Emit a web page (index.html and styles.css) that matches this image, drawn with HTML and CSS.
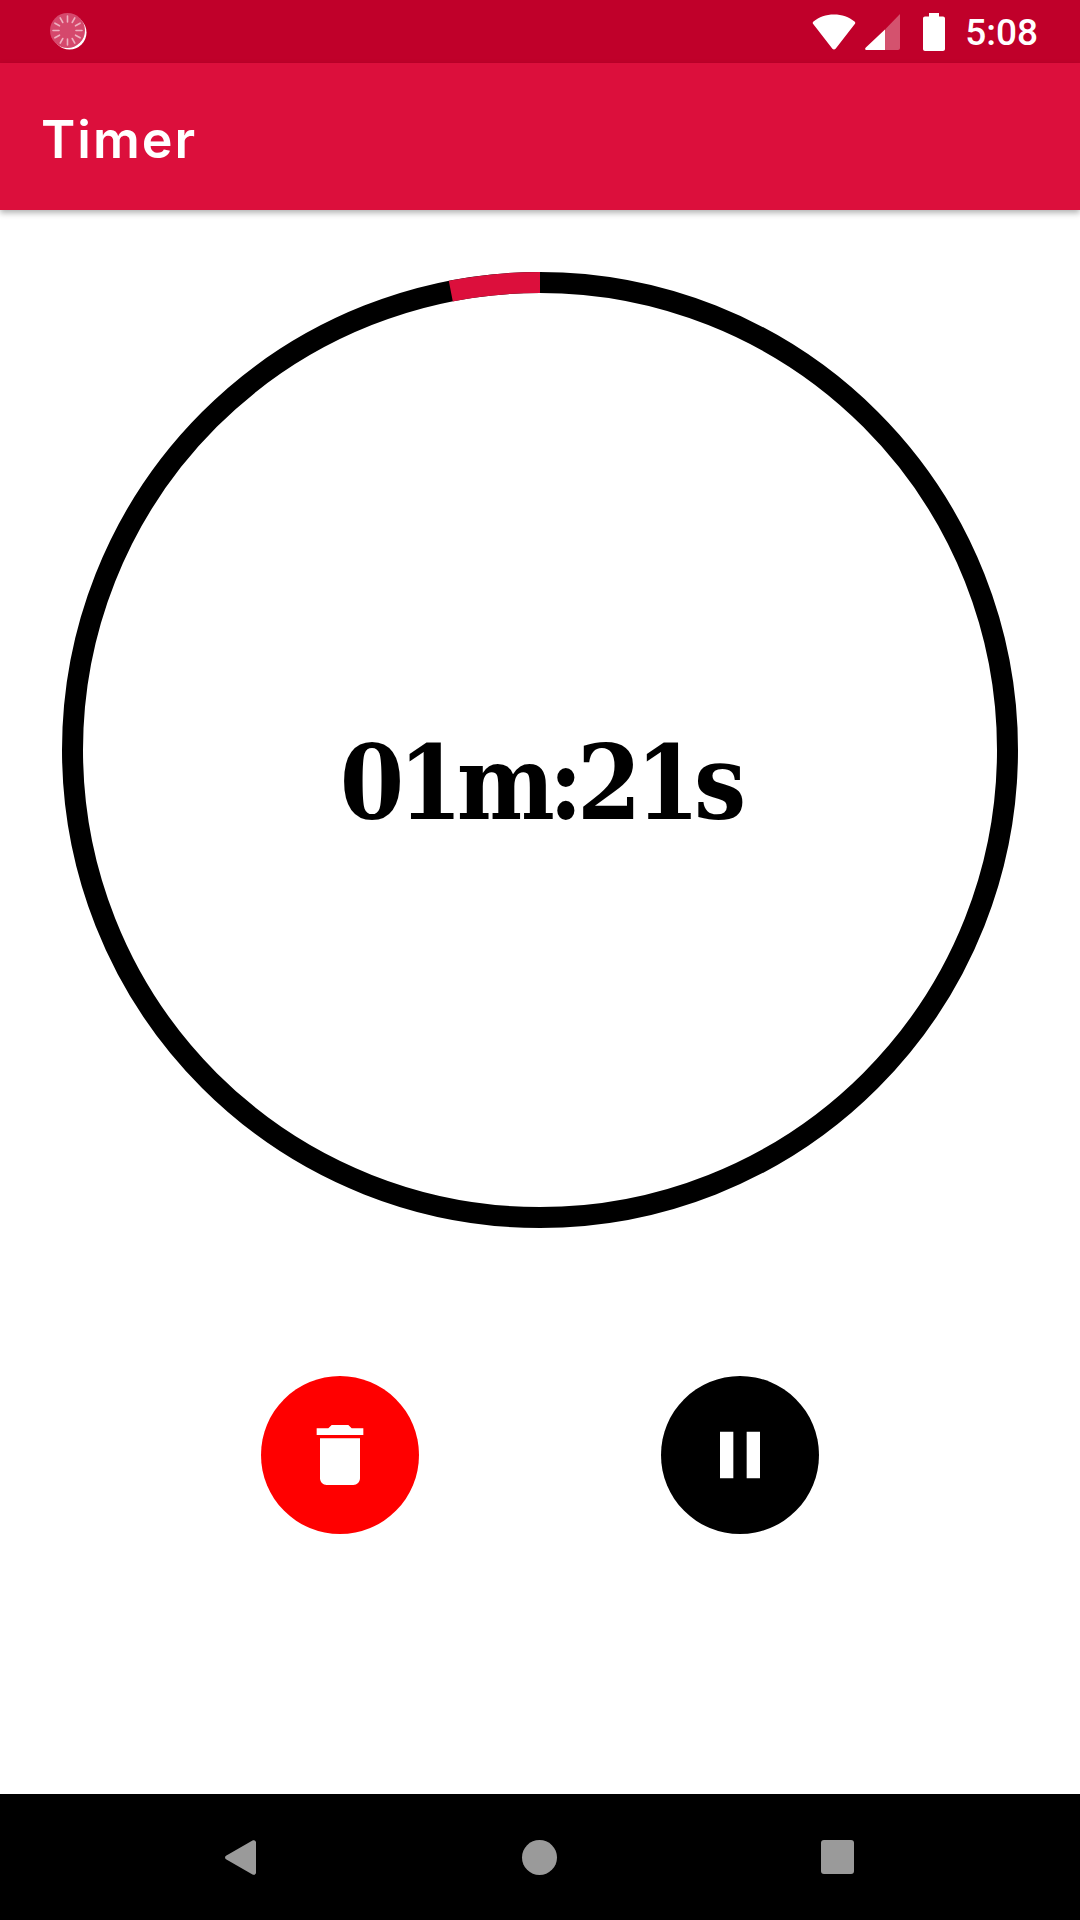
FILE: index.html
```html
<!DOCTYPE html>
<html lang="en">
  <head>
    <meta charset="UTF-8" />
    <meta name="viewport" content="width=device-width, initial-scale=1.0" />
    <title>Timer</title>
    <link rel="stylesheet" href="styles.css">
  </head>
  <body>
    <div class="screen">
      <div class="status-bar">
        <svg class="status-loader" viewBox="0 0 37 37">
          <circle cx="19.5" cy="19.5" r="17" fill="#fff"/>
          <circle cx="17.5" cy="17.5" r="17.5" fill="#d5486c"/>
          <g stroke="#eeb0c0" stroke-width="1.6" stroke-linecap="round">
            <path d="M17.5 3v6M17.5 26v6M3 17.5h6M26 17.5h6"/>
            <path d="M10.2 4.9l2.6 4.6M22.2 25.5l2.6 4.6M4.9 10.2l4.6 2.6M25.5 22.2l4.6 2.6"/>
            <path d="M24.8 4.9l-2.6 4.6M12.8 25.5l-2.6 4.6M30.1 10.2l-4.6 2.6M9.5 22.2l-4.6 2.6"/>
          </g>
        </svg>
        <div class="status-right">
          <svg class="icon-wifi" viewBox="0 0 44 36">
            <path d="M1.500 7.500C7 3 14 .5 22 .5s15 2.500 20.500 7c.9.800 1 1.700.3 2.600L23.600 34.800c-.8 1-2.400 1-3.200 0L1.200 10.100c-.7-.9-.6-1.800.3-2.600z" fill="#fff"/>
          </svg>
          <svg class="icon-signal" viewBox="0 0 35 36">
            <path d="M20 15.500L35 0v34c0 1.100-.9 2-2 2H20z" fill="#fff" fill-opacity=".32"/>
            <path d="M20 15.500V36H1.500C.3 36-.3 34.600.6 33.700z" fill="#fff"/>
          </svg>
          <svg class="icon-battery" viewBox="0 0 22 38">
            <path d="M6 0h10v3.500h4c1.100 0 2 .9 2 2V36c0 1.100-.9 2-2 2H2c-1.100 0-2-.9-2-2V5.500c0-1.100.9-2 2-2h4z" fill="#fff"/>
          </svg>
          <span class="status-time">5:08</span>
        </div>
      </div>

      <header class="app-bar">
        <h1>Timer</h1>
      </header>

      <main class="content">
        <div class="timer">
          <svg class="timer-ring" viewBox="0 0 956 956">
            <circle cx="478" cy="478" r="467.500" fill="none" stroke="#000" stroke-width="21"/>
            <path d="M388.800 19.100A467.500 467.500 0 0 1 478 10.500" fill="none" stroke="#dc0f3c" stroke-width="21"/>
          </svg>
          <div class="timer-text">01m:21s</div>
        </div>

        <div class="controls">
          <button class="round-btn round-btn-delete">
            <svg viewBox="0 0 24 24"><path d="M6 19c0 1.100.9 2 2 2h8c1.100 0 2-.9 2-2V7H6v12zM19 4h-3.500l-1-1h-5l-1 1H5v2h14V4z" fill="#fff"/></svg>
          </button>
          <button class="round-btn round-btn-pause">
            <svg viewBox="0 0 24 24"><path d="M6 19h4V5H6v14zm8-14v14h4V5h-4z" fill="#fff"/></svg>
          </button>
        </div>
      </main>

      <nav class="nav-bar">
        <svg class="nav-back" viewBox="0 0 31 35">
          <path d="M1 19.300C-.3 18.400-.3 16.600 1 15.700L27.500.6C29.200-.4 31 .6 31 2.500v30c0 1.900-1.800 2.900-3.500 1.900z" fill="#9a9a9a"/>
        </svg>
        <span class="nav-home"></span>
        <span class="nav-recent"></span>
      </nav>
    </div>
  </body>
</html>
```

FILE: styles.css
```css
* {
  box-sizing: border-box;
}
body {
  margin: 0;
  background: #fff;
  font-family: "Roboto", sans-serif;
}
.screen {
  width: 1080px;
  height: 1920px;
  display: flex;
  flex-direction: column;
  overflow: hidden;
}
.status-bar {
  height: 63px;
  background-color: #c0002a;
  display: flex;
  align-items: center;
  justify-content: space-between;
  padding: 0 42px 0 50px;
}
.status-loader {
  width: 37px;
  height: 37px;
}
.status-right {
  display: flex;
  align-items: center;
}
.icon-wifi {
  width: 44px;
  height: 36px;
  margin-top: 1px;
}
.icon-signal {
  width: 35px;
  height: 36px;
  margin-left: 9px;
  margin-top: 1px;
}
.icon-battery {
  width: 22px;
  height: 38px;
  margin-left: 23px;
}
.status-time {
  margin-left: 20px;
  margin-top: 2px;
  color: #fff;
  font-size: 37px;
  font-weight: 500;
  line-height: 38px;
}
.app-bar {
  height: 147px;
  background-color: #dc0f3c;
  display: flex;
  align-items: center;
  padding: 6px 0 0 41px;
  box-shadow: 0 3px 6px rgba(0, 0, 0, 0.3);
  position: relative;
}
.app-bar h1 {
  margin: 0;
  color: #fff;
  font-family: "Inter", sans-serif;
  font-size: 52px;
  font-weight: 600;
  letter-spacing: 2px;
}
.content {
  flex: 1;
  display: flex;
  flex-direction: column;
  align-items: center;
  padding-top: 62px;
}
.timer {
  width: 956px;
  height: 956px;
  position: relative;
}
.timer-ring {
  display: block;
  width: 956px;
  height: 956px;
}
.timer-text {
  position: absolute;
  left: 0;
  right: 0;
  top: 451px;
  text-align: center;
  color: #000;
  font-family: "DejaVu Serif", serif;
  font-size: 103px;
  font-weight: 700;
  font-stretch: condensed;
  line-height: 120px;
  letter-spacing: -6px;
}
.controls {
  display: flex;
  gap: 242px;
  margin-top: 148px;
}
.round-btn {
  width: 158px;
  height: 158px;
  padding: 0;
  border: 0;
  border-radius: 50%;
  display: flex;
  align-items: center;
  justify-content: center;
}
.round-btn svg {
  width: 80px;
  height: 80px;
}
.round-btn-delete {
  background-color: #ff0000;
}
.round-btn-pause {
  background-color: #000;
}
.nav-bar {
  height: 126px;
  background-color: #000;
  display: flex;
  align-items: center;
  padding-left: 225px;
}
.nav-back {
  width: 31px;
  height: 35px;
}
.nav-home {
  width: 35px;
  height: 35px;
  margin-left: 266px;
  border-radius: 50%;
  background-color: #9a9a9a;
}
.nav-recent {
  width: 33px;
  height: 34px;
  margin-left: 264px;
  border-radius: 3px;
  background-color: #9a9a9a;
}
```
